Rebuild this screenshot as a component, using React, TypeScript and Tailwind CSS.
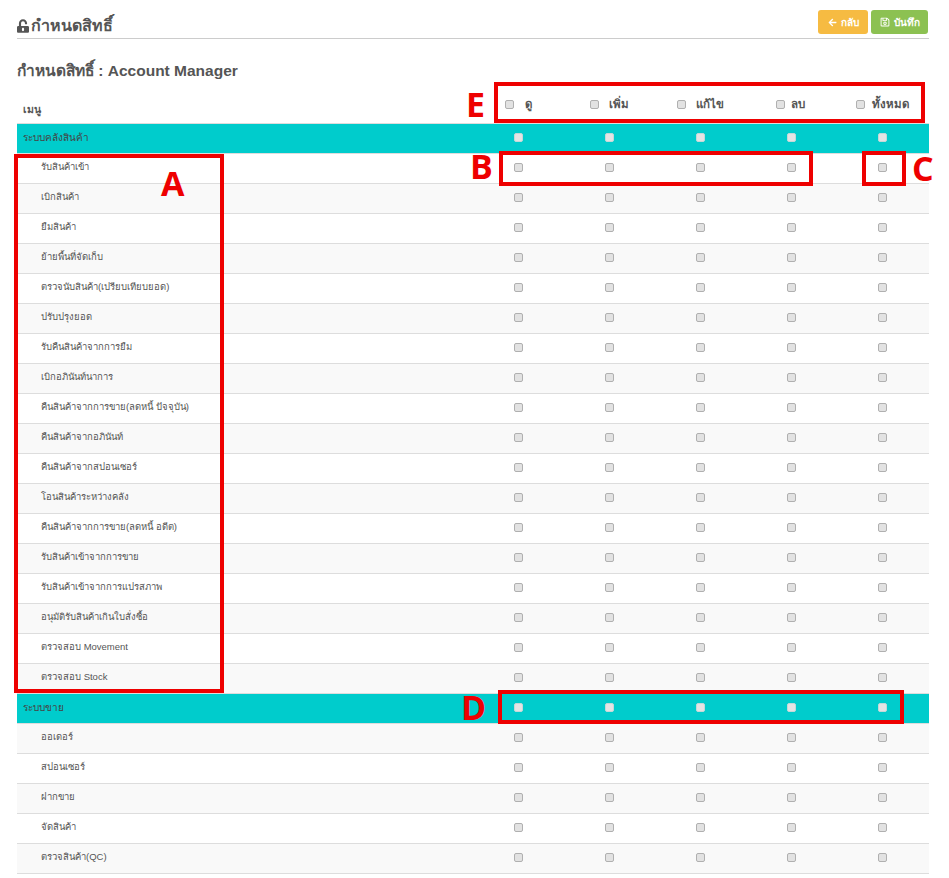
import { FaArrowLeft, FaRegSave, FaUnlockAlt } from "react-icons/fa";

const FONT = "font-['Liberation_Sans','Noto_Sans',sans-serif]";

const stockMenus = [
  "รับสินค้าเข้า",
  "เบิกสินค้า",
  "ยืมสินค้า",
  "ย้ายพื้นที่จัดเก็บ",
  "ตรวจนับสินค้า(เปรียบเทียบยอด)",
  "ปรับปรุงยอด",
  "รับคืนสินค้าจากการยืม",
  "เบิกอภินันท์นาการ",
  "คืนสินค้าจากการขาย(ลดหนี้ ปัจจุบัน)",
  "คืนสินค้าจากอภินันท์",
  "คืนสินค้าจากสปอนเซอร์",
  "โอนสินค้าระหว่างคลัง",
  "คืนสินค้าจากการขาย(ลดหนี้ อดีต)",
  "รับสินค้าเข้าจากการขาย",
  "รับสินค้าเข้าจากการแปรสภาพ",
  "อนุมัติรับสินค้าเกินใบสั่งซื้อ",
  "ตรวจสอบ Movement",
  "ตรวจสอบ Stock",
];

const saleMenus = ["ออเดอร์", "สปอนเซอร์", "ฝากขาย", "จัดสินค้า", "ตรวจสินค้า(QC)"];

const headers = [
  { label: "ดู", cell: "w-[85px]", gap: "ml-[11px]" },
  { label: "เพิ่ม", cell: "w-[87px]", gap: "ml-[10px]" },
  { label: "แก้ไข", cell: "w-[99px]", gap: "ml-[10px]" },
  { label: "ลบ", cell: "w-[80px]", gap: "ml-[6px]" },
  { label: "ทั้งหมด", cell: "w-[70px]", gap: "ml-[7px]" },
];

function Check({ light }: { light?: boolean }) {
  return (
    <input
      type="checkbox"
      className={`appearance-none block w-[9px] h-[9px] rounded-[2px] border ${
        light ? "border-[#c4d8d8] bg-[#e4e4e4]" : "border-[#b0b0b0] bg-[#e2e2e2]"
      }`}
    />
  );
}

function Checks({ light }: { light?: boolean }) {
  return (
    <>
      {[0, 1, 2, 3, 4].map((i) => (
        <div key={i} className="flex items-center justify-center pb-[2px]">
          <Check light={light} />
        </div>
      ))}
    </>
  );
}

function GroupRow({ name }: { name: string }) {
  return (
    <div className="grid grid-cols-[456px_repeat(5,91px)] h-[30px] border-t border-[#dddddd] bg-[#00cccc]">
      <div className="pl-[6px] pb-[2px] flex items-center text-[10px] text-[#444]">{name}</div>
      <Checks light />
    </div>
  );
}

function MenuRow({ name, striped }: { name: string; striped: boolean }) {
  return (
    <div
      className={`grid grid-cols-[456px_repeat(5,91px)] h-[30px] border-t border-[#dddddd] ${
        striped ? "bg-[#f9f9f9]" : "bg-white"
      }`}
    >
      <div className="pl-[24px] pb-[2px] flex items-center text-[9.5px] text-[#555]">{name}</div>
      <Checks />
    </div>
  );
}

function Mark({ className, letter, letterClass }: { className: string; letter?: string; letterClass?: string }) {
  return (
    <>
      <div className={`absolute border-[4px] border-[#ee0000] ${className}`} />
      {letter && (
        <div className={`absolute text-[#ee0000] text-[34px] leading-none font-bold font-['Open_Sans',sans-serif] ${letterClass}`}>
          {letter}
        </div>
      )}
    </>
  );
}

export default function App() {
  return (
    <div className={`relative w-[949px] h-[878px] overflow-hidden bg-white ${FONT}`}>
      <div className="pl-[17px] w-[929px]">
        {/* HEADER */}
        <div className="h-[39px] border-b border-[#cccccc] flex items-start justify-between">
          <div className="flex items-center gap-[2px] pt-[16px] text-[#555]">
            <FaUnlockAlt className="w-[12px] h-[14px]" />
            <span className="text-[16px] leading-[20px] font-bold">กำหนดสิทธิ์</span>
          </div>
          <div className="flex gap-[3px] pt-[10px] pr-[1px]">
            <button className="w-[50px] h-[24px] rounded-[3px] bg-[#f6bb42] text-white text-[10px] font-bold flex items-center justify-center gap-[4px]">
              <FaArrowLeft className="text-[9px]" />
              กลับ
            </button>
            <button className="w-[57px] h-[24px] rounded-[3px] bg-[#8cc152] text-white text-[10px] font-bold flex items-center justify-center gap-[4px]">
              <FaRegSave className="text-[10px]" />
              บันทึก
            </button>
          </div>
        </div>

        <h1 className="mt-[22px] h-[20px] text-[15.5px] leading-[20px] font-bold text-[#555]">
          กำหนดสิทธิ์ : Account Manager
        </h1>

        {/* TABLE HEADER */}
        <div className="mt-[12px] h-[30px] flex items-start">
          <div className="w-[488px] pl-[6px] pt-[8px] text-[10.5px] leading-[16px] font-bold text-[#555]">เมนู</div>
          {headers.map((h) => (
            <div key={h.label} className={`flex items-center h-[20px] pt-[3px] ${h.cell}`}>
              <Check />
              <span className={`${h.gap} text-[11.5px] font-bold text-[#555]`}>{h.label}</span>
            </div>
          ))}
        </div>

        {/* ROWS */}
        <GroupRow name="ระบบคลังสินค้า" />
        {stockMenus.map((m, i) => (
          <MenuRow key={m} name={m} striped={i % 2 === 1} />
        ))}
        <GroupRow name="ระบบขาย" />
        {saleMenus.map((m, i) => (
          <MenuRow key={m} name={m} striped={i % 2 === 0} />
        ))}
        <div className="border-t border-[#dddddd]" />
      </div>

      {/* ANNOTATIONS */}
      <Mark className="left-[14px] top-[154px] w-[210px] h-[539px]" letter="A" letterClass="left-[161px] top-[166px]" />
      <Mark className="left-[499px] top-[151px] w-[314px] h-[35px]" letter="B" letterClass="left-[470px] top-[149px]" />
      <Mark className="left-[862px] top-[151px] w-[44px] h-[35px]" letter="C" letterClass="left-[912px] top-[151px]" />
      <Mark className="left-[498px] top-[690px] w-[406px] h-[34px]" letter="D" letterClass="left-[461px] top-[690px]" />
      <Mark className="left-[494px] top-[82px] w-[431px] h-[41px]" letter="E" letterClass="left-[466px] top-[87px]" />
    </div>
  );
}
